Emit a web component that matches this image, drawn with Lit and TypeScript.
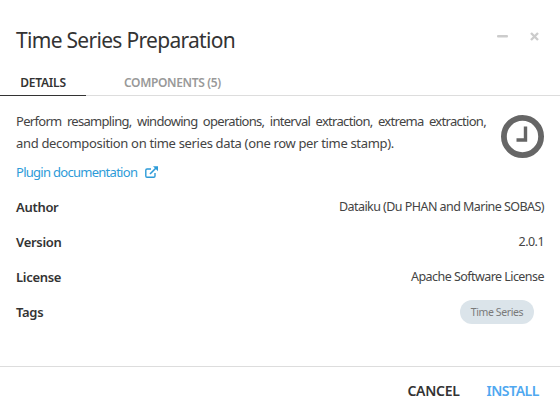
import { LitElement, html, css } from "lit";
import { customElement } from "lit/decorators.js";

@customElement("app-root")
export class AppRoot extends LitElement {
  static styles = css`
    :host {
      display: block;
      width: 560px;
      height: 414px;
      background: #fff;
      font-family: "Noto Sans", "Open Sans", sans-serif;
      color: #333;
      font-size: 13px;
      overflow: hidden;
    }
    .dialog { display: flex; flex-direction: column; height: 414px; }
    .header {
      height: 78px; box-sizing: border-box; padding: 0 21px 0 16px;
      display: flex; justify-content: space-between; align-items: center;
    }
    .title { font-size: 21px; font-weight: 400; color: #333; margin: 2px 0 0; letter-spacing: -0.7px; }
    .win { display: flex; gap: 22px; align-items: center; margin-top: -5px; }
    .win svg { display: block; }
    .tabs { display: flex; height: 17px; border-bottom: 1px solid #ddd; }
    .tab {
      width: 86px; height: 17px; text-align: center;
      font-size: 12px; font-weight: 600; line-height: 9px; color: #333; letter-spacing: -0.2px;
      border-bottom: 1px solid #333; margin-bottom: -1px;
    }
    .tab.off { width: auto; margin-left: 38px; color: #999; border-bottom: none; letter-spacing: -0.35px; }
    .body { flex: 1; padding: 14px 16px 0; }
    .desc-row { display: flex; justify-content: space-between; }
    .desc { width: 470px; margin: 0; line-height: 22px; font-size: 13px; color: #444; }
    .line { display: block; white-space: nowrap; letter-spacing: -0.33px; }
    .line.first { letter-spacing: -0.7px; text-align: justify; text-align-last: justify; white-space: normal; }
    .clock { margin: 5px 0 0 0; }
    .link {
      display: flex; align-items: center; gap: 8px; margin-top: 3px;
      font-size: 13px; line-height: 22px; color: #2d9bd8; letter-spacing: -0.72px;
    }
    .rows { margin-top: 6px; }
    .row {
      display: flex; justify-content: space-between; align-items: center; height: 35px;
      font-size: 12.5px; color: #444; letter-spacing: -0.55px;
    }
    .row b { font-weight: 600; color: #333; font-size: 13px; letter-spacing: -0.3px; }
    .tag {
      background: #dbe4ea; color: #7a7a7a; font-size: 10.5px; line-height: 24px;
      height: 24px; width: 74px; text-align: center; border-radius: 12px; margin-right: 10px;
      letter-spacing: -0.4px;
    }
    .footer {
      height: 47px; border-top: 1px solid #ddd; display: flex; justify-content: flex-end;
      align-items: center; gap: 27px; padding-right: 21px; font-size: 14px; font-weight: 600;
      letter-spacing: -0.3px;
    }
    .cancel { color: #333; }
    .install { color: #4fa8f0; letter-spacing: -0.45px; }
  `;

  render() {
    return html`
      <div class="dialog">
        <div class="header">
          <h1 class="title">Time Series Preparation</h1>
          <div class="win">
            <svg width="11" height="3" viewBox="0 0 11 3"><rect width="11" height="2.5" rx="1" fill="#ccc"/></svg>
            <svg width="9" height="9" viewBox="0 0 9 9"><path d="M1 1l7 7M8 1l-7 7" stroke="#ccc" stroke-width="2.4" fill="none"/></svg>
          </div>
        </div>
        <div class="tabs">
          <div class="tab">DETAILS</div>
          <div class="tab off">COMPONENTS (5)</div>
        </div>
        <div class="body">
          <div class="desc-row">
            <p class="desc"><span class="line first">Perform resampling, windowing operations, interval extraction, extrema extraction,</span><span class="line">and decomposition on time series data (one row per time stamp).</span></p>
            <svg class="clock" width="43" height="43" viewBox="0 0 43 43" fill="none">
              <circle cx="21.5" cy="21.5" r="18.6" stroke="#666" stroke-width="5.8"/>
              <path d="M24.5 11.5v13.5h-9" stroke="#666" stroke-width="3.4"/>
            </svg>
          </div>
          <div class="link">
            <span>Plugin documentation</span>
            <svg width="13" height="12" viewBox="0 0 13 12" fill="none" stroke="#2d9bd8" stroke-width="1.4">
              <path d="M10 7v3a1.2 1.2 0 0 1-1.2 1.2H2A1.2 1.2 0 0 1 .8 10V4.2A1.2 1.2 0 0 1 2 3h4"/>
              <path d="M5 8l6.5-6.5" stroke-width="1.6"/>
              <path d="M8 .2h5v5z" fill="#2d9bd8" stroke="none"/>
            </svg>
          </div>
          <div class="rows">
            <div class="row"><b>Author</b><span>Dataiku (Du PHAN and Marine SOBAS)</span></div>
            <div class="row"><b>Version</b><span>2.0.1</span></div>
            <div class="row"><b>License</b><span>Apache Software License</span></div>
            <div class="row"><b>Tags</b><span class="tag">Time Series</span></div>
          </div>
        </div>
        <div class="footer">
          <span class="cancel">CANCEL</span>
          <span class="install">INSTALL</span>
        </div>
      </div>
    `;
  }
}
